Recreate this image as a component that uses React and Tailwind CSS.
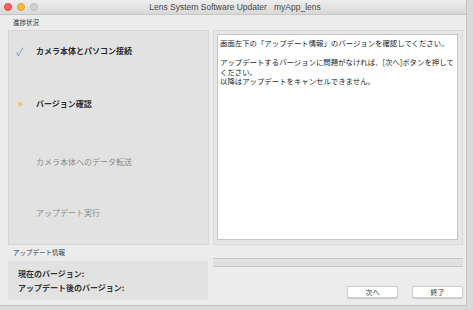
export default function App() {
  const jp = { fontFamily: '"Noto Sans CJK JP", "Noto Sans", sans-serif' };
  return (
    <div className="w-[473px] h-[310px] bg-[#d9d9d9] overflow-hidden" style={jp}>
      <div className="w-[467px] h-[306px] bg-[#ececec] border-r border-b border-[#c2c2c2] flex flex-col">
        {/* title bar */}
        <div className="h-[15px] flex items-center px-[4px] bg-gradient-to-b from-[#eeeeee] to-[#d8d8d8] border-b border-[#c6c6c6] relative">
          <div className="flex items-center gap-[5px]">
            <span className="w-[8px] h-[8px] rounded-full bg-[#fc605c] border border-[#e0443e]" />
            <span className="w-[8px] h-[8px] rounded-full bg-[#fdbc40] border border-[#dea123]" />
            <span className="w-[8px] h-[8px] rounded-full bg-[#d0d0d0] border border-[#c0c0c0]" />
          </div>
          <div className="flex-1 text-center text-[8.5px] text-[#4a4a4a] leading-none" style={{ fontFamily: '"Liberation Sans", Arial, sans-serif' }}>
            Lens System Software Updater&nbsp;&nbsp;&nbsp;myApp_lens
          </div>
          <div className="w-[30px]" />
        </div>

        {/* body */}
        <div className="flex-1 pl-[8px] flex flex-col">
          <div className="h-[15px] flex items-center pl-[5px] pt-[1px] text-[6.5px] text-[#333]">進捗状況</div>
          <div className="flex gap-[4px]">
            {/* left progress panel */}
            <div className="w-[201px] h-[215px] bg-[#e2e2e2] border border-[#d6d6d6] flex flex-col pl-[7px] pt-[14px]">
              <div className="flex items-center h-[12px]">
                <span className="w-[20px] text-[11px] leading-none text-[#6e9fd4]">✓</span>
                <span className="text-[8px] font-bold text-[#2a2a2a] leading-none">カメラ本体とパソコン接続</span>
              </div>
              <div className="flex items-center h-[12px] mt-[41px]">
                <span className="w-[20px] text-[6px] leading-none text-[#e9c46a] pl-[2px]">▶</span>
                <span className="text-[8px] font-bold text-[#2a2a2a] leading-none">バージョン確認</span>
              </div>
              <div className="flex items-center h-[12px] mt-[46px]">
                <span className="w-[20px]" />
                <span className="text-[8px] text-[#8c8c8c] leading-none">カメラ本体へのデータ転送</span>
              </div>
              <div className="flex items-center h-[12px] mt-[39px]">
                <span className="w-[20px]" />
                <span className="text-[8px] text-[#8c8c8c] leading-none">アップデート実行</span>
              </div>
            </div>
            {/* right message panel */}
            <div className="w-[250px] h-[215px] bg-[#e6e6e6] border border-[#d8d8d8] pl-[3px] pr-[4px] pt-[3px] pb-[4px] flex">
              <div className="flex-1 bg-white border border-[#c4c4c4] px-[2px] pt-[3px] text-[7.4px] leading-[9.6px] text-[#1e1e1e] whitespace-nowrap">
                <div>画面左下の「アップデート情報」のバージョンを確認してください。</div>
                <div className="h-[9.6px]" />
                <div>アップデートするバージョンに問題がなければ、[次へ]ボタンを押して</div>
                <div>ください。</div>
                <div>以降はアップデートをキャンセルできません。</div>
              </div>
            </div>
          </div>

          {/* bottom */}
          <div className="flex gap-[5px]">
            <div className="w-[200px] flex flex-col">
              <div className="h-[16px] flex items-center pl-[5px] text-[6.5px] text-[#333]">アップデート情報</div>
              <div className="h-[39px] bg-[#e2e2e2] flex flex-col justify-center gap-[6px] pl-[10px]">
                <div className="text-[8px] font-bold text-[#333] leading-none">現在のバージョン:</div>
                <div className="text-[8px] font-bold text-[#333] leading-none">アップデート後のバージョン:</div>
              </div>
            </div>
            <div className="w-[250px] flex flex-col">
              <div className="mt-[13px] h-[9px] bg-[#e0e0e0] border-t border-b border-[#c8c8c8]" />
              <div className="mt-[19px] flex justify-end gap-[14px]">
                <div className="w-[51px] h-[12px] bg-white rounded-[2px] border border-[#d0d0d0] shadow-[0_0.5px_1px_rgba(0,0,0,0.15)] flex items-center justify-center text-[7px] text-[#333] leading-none">次へ</div>
                <div className="w-[51px] h-[12px] bg-white rounded-[2px] border border-[#d0d0d0] shadow-[0_0.5px_1px_rgba(0,0,0,0.15)] flex items-center justify-center text-[7px] text-[#333] leading-none">終了</div>
              </div>
            </div>
          </div>
        </div>
      </div>
    </div>
  );
}
